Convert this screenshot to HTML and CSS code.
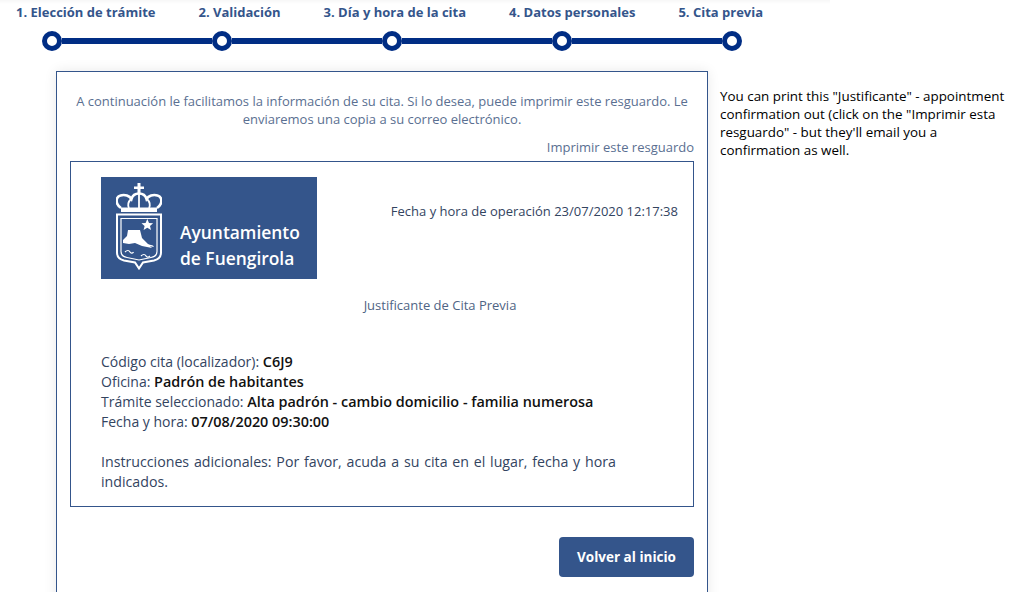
FILE: index.html
```html
<!DOCTYPE html>
<html lang="es">
<head>
<meta charset="utf-8">
<title>Justificante de Cita Previa</title>
<link rel="stylesheet" href="styles.css">
</head>
<body>
<header class="stepper">
  <ol class="step-labels">
    <li>1. Elección de trámite</li>
    <li>2. Validación</li>
    <li>3. Día y hora de la cita</li>
    <li>4. Datos personales</li>
    <li>5. Cita previa</li>
  </ol>
  <div class="step-track">
    <span class="dot"></span><span class="bar"></span>
    <span class="dot"></span><span class="bar"></span>
    <span class="dot"></span><span class="bar"></span>
    <span class="dot"></span><span class="bar"></span>
    <span class="dot"></span>
  </div>
</header>
<div class="content">
  <main class="card">
    <p class="intro">A continuación le facilitamos la información de su cita. Si lo desea, puede imprimir este resguardo. Le enviaremos una copia a su correo electrónico.</p>
    <div class="print-row"><a class="print-link">Imprimir este resguardo</a></div>
    <section class="receipt">
      <div class="receipt-head">
        <div class="logo">
          <svg class="crest" width="46" height="88" viewBox="0 0 46 88" aria-hidden="true">
            <path fill="#fff" d="M21.500 0h3v3.500H28v2.500h-3.500v5h-3V6H18V3.500h3.500z"/>
            <path fill="none" stroke="#fff" stroke-width="2.600" d="M5 25C-1 21-.5 14 4.500 12.500c4.500-1.500 9 .5 11 3.500 1-3.500 3.500-5.500 7.500-5.500s6.500 2 7.500 5.500c2-3 6.500-5 11-3.500C46.500 14 47 21 41 25"/>
            <path fill="none" stroke="#fff" stroke-width="1.800" d="M15 16c-3 3-3.500 6-2 9M31 16c3 3 3.500 6 2 9M23 11v14"/>
            <path fill="#fff" d="M5 24.500h36v4.500H5z"/>
            <path fill="none" stroke="#fff" stroke-width="2" d="M1 31.500h44v38c0 5-3 7-7 8l-11 2-4 6-4-6-11-2c-4-1-7-3-7-8z"/>
            <path fill="none" stroke="#fff" stroke-width="1.200" d="M5 35.500h36v33c0 4-3 5.500-6 6l-12 2.500-12-2.500c-3-.5-6-2-6-6z"/>
            <path fill="#fff" d="M31.300 36l1.700 3.900 4.100.3-3.100 2.700 1 4.100-3.700-2.200-3.700 2.200 1-4.100-3.100-2.700 4.100-.3z"/>
            <path fill="#fff" d="M7 57l4-4 1-6h12l2 8 10 10-10-2-7-3-6 1-6-1z"/>
            <path fill="#fff" d="M31 61l6 1.500 1 1.500-5-1z"/>
            <path fill="none" stroke="#fff" stroke-width="1.200" d="M9 69c2-2 4-2 5 0s3 1 3.500 0M25 73c2-2 4-2 5 0s3 1 4 0"/>
          </svg>
          <div class="logo-text">Ayuntamiento<br>de Fuengirola</div>
        </div>
        <p class="op-date">Fecha y hora de operación 23/07/2020 12:17:38</p>
      </div>
      <h1 class="receipt-title">Justificante de Cita Previa</h1>
      <div class="details">
        <div>Código cita (localizador): <b>C6J9</b></div>
        <div>Oficina: <b>Padrón de habitantes</b></div>
        <div>Trámite seleccionado: <b>Alta padrón - cambio domicilio - familia numerosa</b></div>
        <div>Fecha y hora: <b>07/08/2020 09:30:00</b></div>
      </div>
      <p class="extra">Instrucciones adicionales: Por favor, acuda a su cita en el lugar, fecha y hora indicados.</p>
    </section>
    <div class="actions"><button class="btn" type="button">Volver al inicio</button></div>
  </main>
  <aside class="note">You can print this "Justificante" - appointment confirmation out (click on the "Imprimir esta resguardo" - but they'll email you a confirmation as well.</aside>
</div>
</body>
</html>
```
FILE: styles.css
```css
* { box-sizing: border-box; }
html, body { height: 592px; overflow: hidden; }
body {
  margin: 0;
  background: #fff;
  color: #000;
  font-family: "Open Sans", "Liberation Sans", sans-serif;
  font-size: 14px;
}
.stepper {
  padding-top: 3px;
  background: linear-gradient(#f7f7f7, #fff) no-repeat 0 0 / 830px 4px;
}
.step-labels {
  list-style: none;
  margin: 0;
  padding: 0 0 0 16px;
  display: flex;
  gap: 43px;
  height: 28px;
  color: #34558b;
  font-size: 13px;
  font-weight: 700;
  line-height: 19px;
  white-space: nowrap;
}
.step-track {
  display: flex;
  align-items: center;
  margin-left: 42px;
  width: 700px;
}
.dot {
  flex: none;
  width: 20px;
  height: 20px;
  border: 5px solid #002d84;
  border-radius: 50%;
  background: #fff;
}
.bar {
  flex: 1;
  height: 6px;
  background: #002d84;
}
.content {
  display: flex;
  align-items: flex-start;
  margin-top: 20px;
  padding-left: 56px;
  gap: 12px;
}
.card {
  flex: none;
  width: 652px;
  height: 560px;
  padding: 20px 13px 0;
  border: 1px solid #34558b;
  background: #fff;
  box-shadow: 0 0 12px rgba(0, 0, 0, .09);
}
.intro {
  margin: 0;
  color: #5a6f91;
  font-size: 13px;
  line-height: 18px;
  text-align: center;
}
.print-row {
  margin-top: 10px;
  height: 23px;
  text-align: right;
  font-size: 13px;
  line-height: 18px;
  color: #5a6f91;
}
.receipt {
  height: 346px;
  padding: 15px 15px 0 30px;
  border: 1px solid #34558b;
}
.receipt-head {
  display: flex;
  justify-content: space-between;
  align-items: flex-start;
}
.logo {
  display: flex;
  align-items: flex-start;
  gap: 18px;
  flex: none;
  width: 216px;
  height: 102px;
  padding: 6px 0 0 15px;
  background: #34558b;
}
.crest { flex: none; }
.logo-text {
  margin-top: 36px;
  color: #fff;
  font-size: 17.400px;
  font-weight: 600;
  line-height: 26px;
  white-space: nowrap;
}
.op-date {
  margin: 24px 0 0;
  color: #33445f;
  font-size: 13px;
  line-height: 20px;
}
.receipt-title {
  margin: 16px 0 0 101px;
  color: #4f6484;
  font-size: 13px;
  font-weight: 400;
  line-height: 20px;
  text-align: center;
}
.details {
  margin-top: 37px;
  color: #33445f;
  font-size: 14px;
  line-height: 20px;
}
.details b {
  color: #111;
  font-size: 14.400px;
  font-weight: 600;
}
.extra {
  margin: 20px 0 0;
  padding-right: 30px;
  color: #33445f;
  font-size: 14.200px;
  word-spacing: 1.100px;
  line-height: 20px;
}
.actions {
  display: flex;
  justify-content: flex-end;
  margin-top: 30px;
}
.btn {
  width: 135px;
  height: 40px;
  border: 0;
  border-radius: 4px;
  background: #34558b;
  color: #fff;
  font-family: inherit;
  font-size: 13.500px;
  font-weight: 700;
}
.note {
  width: 290px;
  margin-top: 16px;
  color: #000;
  font-size: 13.400px;
  line-height: 18px;
}
```
